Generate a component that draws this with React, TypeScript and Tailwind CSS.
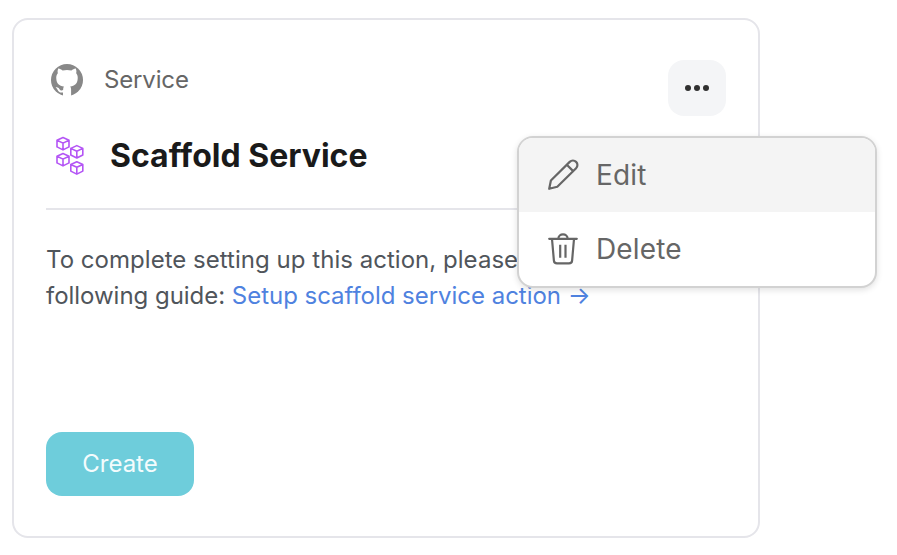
import React from 'react';

function GithubMark() {
  return (
    <svg className="h-8 w-8 shrink-0" viewBox="0 0 32 32">
      <circle cx="16" cy="16" r="16" fill="#888888" />
      <path
        fill="#ffffff"
        d="M7.2 4.6C8.7 4.5 10.3 5.6 11.6 6.6Q16 5.5 20.4 6.6C21.7 5.6 23.3 4.5 24.8 4.6Q25.8 7 25.2 9.2C26.5 10.8 26.9 12.3 26.7 14.8C26.4 19.8 23.8 21.8 19.2 22.5Q20.1 23.6 20.1 25.4V32H12V28.4C8.8 29.1 7.5 27.6 6.7 25.9Q6 24.5 4.6 23.5C6.3 22.9 7.5 23.7 8.5 25.2C9.5 26.7 10.8 26.7 12.1 26.1Q12.1 23.6 12.9 22.5C8.2 21.8 5.6 19.8 5.3 14.8C5.1 12.3 5.5 10.8 6.8 9.2Q6.2 7 7.2 4.6Z"
      />
    </svg>
  );
}

const cubes = [
  [7, 7.7],
  [20.8, 15.8],
  [7, 23.7],
  [20.8, 31.9],
];

function CubesIcon() {
  return (
    <svg className="h-10 w-7 shrink-0" viewBox="0 0 28 40" fill="none" stroke="#b455f5" strokeWidth="1.6" strokeLinejoin="round" strokeLinecap="round">
      {cubes.map(([x, y]) => (
        <path key={`${x}-${y}`} transform={`translate(${x} ${y})`} d="M0-6.2 6-3.4V3.2L0 6.2-6 3.2V-3.4ZM-6-3.4 0-.6 6-3.4M0-.6V6.2" />
      ))}
    </svg>
  );
}

function PencilIcon() {
  return (
    <svg className="h-8 w-8 shrink-0" viewBox="0 0 32 32" fill="none" stroke="#666666" strokeWidth="2.2" strokeLinejoin="round" strokeLinecap="round">
      <path d="M2.2 29.8 3.9 21.5 22.7 2.9a4.5 4.5 0 0 1 6.4 6.4L10.3 27.7ZM19.8 5.7 26.2 12.1" />
    </svg>
  );
}

function TrashIcon() {
  return (
    <svg className="h-8 w-8 shrink-0" viewBox="0 0 32 32" fill="none" stroke="#666666" strokeWidth="2.2" strokeLinejoin="round" strokeLinecap="round">
      <path d="M2.2 5.8H29.8M5 6 6.9 27.6Q7.1 30.4 10 30.4H22Q24.9 30.4 25.1 27.6L27 6M11.4 5.3a4.6 4 0 0 1 9.2 0" />
      <path strokeLinecap="butt" d="M13.2 11.8V24.7M18.5 11.8V24.7" />
    </svg>
  );
}

export default function App() {
  return (
    <main className="relative h-[555px] w-[897px] overflow-hidden bg-white pl-3 pt-[18px] font-['Inter','Liberation_Sans',sans-serif]">
      <section className="flex h-[520px] w-[748px] flex-col rounded-2xl border-2 border-[#e5e5ea] px-8 pt-10">
        <header className="flex h-[56px] justify-between">
          <div className="flex h-10 items-center gap-[21px] pl-[5px]">
            <GithubMark />
            <span className="text-2xl tracking-[-0.15px] text-[#666666]">Service</span>
          </div>
          <button className="flex h-14 w-[58px] items-center justify-center gap-[3px] rounded-2xl bg-[#f4f5f7]" aria-label="More">
            <i className="h-1.5 w-1.5 rounded-full bg-[#303030]" />
            <i className="h-1.5 w-1.5 rounded-full bg-[#303030]" />
            <i className="h-1.5 w-1.5 rounded-full bg-[#303030]" />
          </button>
        </header>
        <div className="mt-5 flex h-10 items-center gap-[26px] pl-2.5">
          <CubesIcon />
          <h1 className="text-[32px] font-bold leading-10 text-[#1a1a1a]">Scaffold Service</h1>
        </div>
        <div className="mt-8 h-0.5 shrink-0 bg-[#e5e5ea]" />
        <p className="mt-8 whitespace-nowrap text-2xl leading-9 tracking-[-0.03px] text-[#50555b]">
          <span className="tracking-[0.03px]">To complete setting up this action, please</span>
          <br />
          following guide: <a className="text-[#4f82df]">Setup scaffold service action →</a>
        </p>
        <button className="mt-[118px] h-16 w-[148px] shrink-0 rounded-2xl bg-[#6ecddb] text-2xl text-[#f4fcfd]">Create</button>
      </section>
      <div className="absolute left-[517px] top-[136px] h-[152px] w-[360px] overflow-hidden rounded-2xl border-2 border-[#d2d2d2] bg-white text-[28px] tracking-[0.15px] text-[#666666] shadow-[0_2px_6px_rgba(0,0,0,0.12)]">
        <div className="flex h-[74px] items-center gap-[17px] bg-[#f4f4f4] pl-7">
          <PencilIcon />
          <span>Edit</span>
        </div>
        <div className="flex h-[74px] items-center gap-[17px] pl-7">
          <TrashIcon />
          <span>Delete</span>
        </div>
      </div>
    </main>
  );
}
